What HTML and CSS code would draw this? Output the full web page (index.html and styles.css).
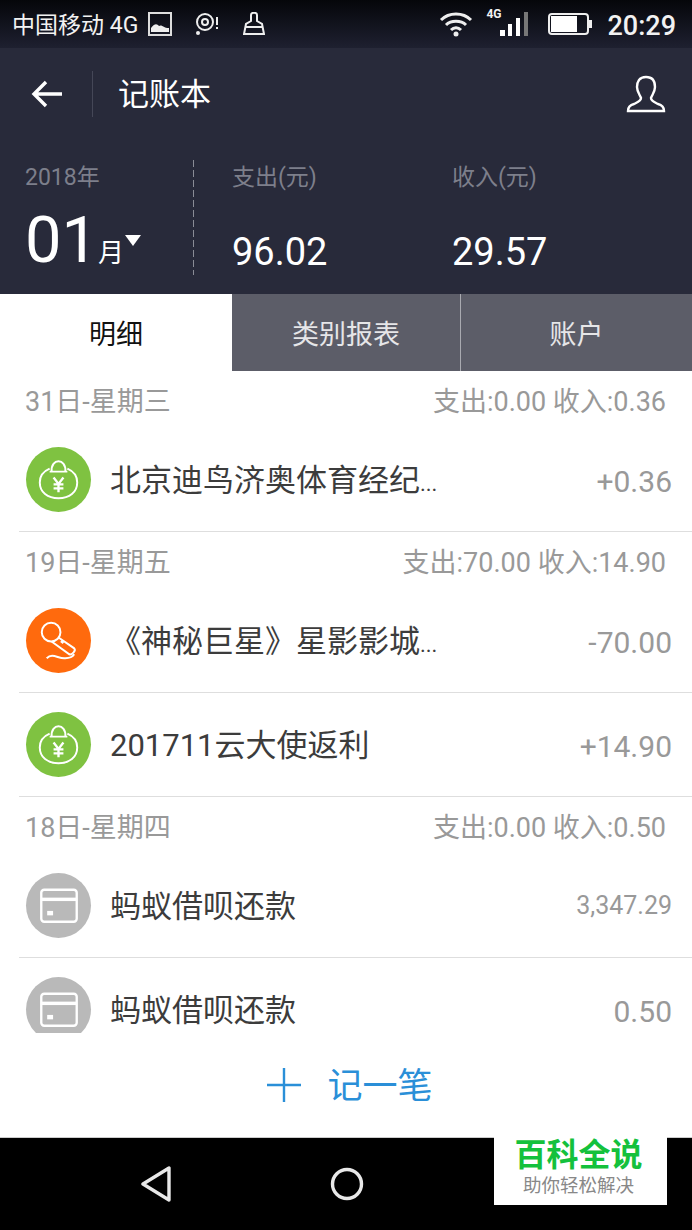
FILE: index.html
```html
<!DOCTYPE html>
<html lang="zh-CN">
<head>
    <meta charset="UTF-8">
    <title>记账本</title>
    <link rel="stylesheet" href="styles.css">
</head>
<body>
    <svg class="defs" width="0" height="0">
        <symbol id="bag" viewBox="0 0 66 66">
            <path d="M26 25 C25 11 41 11 40 25 M24 25 H42" fill="none" stroke="#fff" stroke-width="2"/>
            <path d="M24 22 C17 25 14 30 14 36 C14 46 22 52 33 52 C44 52 52 46 52 36 C52 30 49 25 42 22" fill="none" stroke="#fff" stroke-width="2"/>
            <path d="M28 31 L33 37.5 L38 31 M33 37.5 V46 M28 38 H38 M28 42 H38" fill="none" stroke="#fff" stroke-width="2.4"/>
        </symbol>
        <symbol id="mic" viewBox="0 0 66 66">
            <circle cx="25.5" cy="24.5" r="9.5" fill="none" stroke="#fff" stroke-width="2"/>
            <path d="M33 30 L49 41 C51 43 47 48 44 47 L26 34" fill="none" stroke="#fff" stroke-width="2"/>
            <path d="M35.5 33.5 L38 35.5" stroke="#fff" stroke-width="2.5"/>
            <path d="M21 51 C27 45 33 52 40 51 C44 51 47 50 49 47" fill="none" stroke="#fff" stroke-width="2"/>
        </symbol>
        <symbol id="card" viewBox="0 0 66 66">
            <rect x="15.5" y="17" width="36" height="32.5" rx="3" fill="none" stroke="#fff" stroke-width="2.4"/>
            <rect x="15.5" y="25" width="36" height="3.5" fill="#fff"/>
            <rect x="21.5" y="38.5" width="6" height="4.5" fill="#fff"/>
        </symbol>
    </svg>

    <div class="status-bar">
        <span class="carrier">中国移动 4G</span>
        <svg class="st-icon pic" viewBox="0 0 24 24">
            <rect x="1" y="1" width="22" height="22" fill="none" stroke="#ddd" stroke-width="2"/>
            <path d="M3 20 V16 C7 11 9 12 11 14 C14 12 15 16 21 16 V20 Z" fill="#eee"/>
        </svg>
        <svg class="st-icon ring" viewBox="0 0 26 24">
            <circle cx="10" cy="10" r="8" fill="none" stroke="#eee" stroke-width="2"/>
            <circle cx="10" cy="10" r="3" fill="none" stroke="#eee" stroke-width="2"/>
            <circle cx="3" cy="21" r="2" fill="#eee"/>
            <path d="M22 5 V13 M22 15 V17" stroke="#eee" stroke-width="2"/>
        </svg>
        <svg class="st-icon brush" viewBox="0 0 22 24">
            <path d="M8 9 V3 C8 0 14 0 14 3 V9 L19 12 L21 22 H1 L3 12 Z M3 15 H19" fill="none" stroke="#eee" stroke-width="2"/>
        </svg>
        <span class="spacer"></span>
        <svg class="st-icon wifi" viewBox="0 0 34 26">
            <path d="M2 9 C10 1 24 1 32 9 M7 14 C12 9 22 9 27 14 M12 19 C15 16 19 16 22 19" fill="none" stroke="#eee" stroke-width="3"/>
            <circle cx="17" cy="23" r="2.5" fill="#eee"/>
        </svg>
        <span class="net">4G</span>
        <svg class="st-icon signal" viewBox="0 0 28 24">
            <rect x="0" y="18" width="5" height="6" fill="#fff"/>
            <rect x="8" y="12" width="4" height="12" fill="#fff"/>
            <rect x="16" y="6" width="4" height="18" fill="#fff"/>
            <rect x="24" y="0" width="4" height="24" fill="#777"/>
        </svg>
        <svg class="st-icon battery" viewBox="0 0 44 22">
            <rect x="1" y="1" width="39" height="20" rx="3" fill="none" stroke="#eee" stroke-width="2"/>
            <rect x="3" y="3" width="26" height="16" fill="#fff"/>
            <rect x="41" y="7" width="3" height="8" fill="#eee"/>
        </svg>
        <span class="time">20:29</span>
    </div>

    <header class="header">
        <div class="nav">
            <svg class="back" viewBox="0 0 32 28">
                <path d="M15 2 L3 14 L15 26 M3 14 H31" fill="none" stroke="#fff" stroke-width="3.4"/>
            </svg>
            <span class="nav-line"></span>
            <span class="nav-title">记账本</span>
            <svg class="user" viewBox="0 0 40 38">
                <path d="M20 2 C13 2 11 7 11 12 C11 17 14 20 15 23 C15 26 12 27 8 29 C4 30 2 32 2 36 H38 C38 32 36 30 32 29 C28 27 25 26 25 23 C26 20 29 17 29 12 C29 7 27 2 20 2 Z" fill="none" stroke="#fff" stroke-width="2.4"/>
            </svg>
        </div>
        <div class="summary">
            <div class="date">
                <div class="label">2018年</div>
                <div class="month"><span class="month-num">01</span><span class="month-unit">月</span><span class="caret"></span></div>
            </div>
            <div class="split"></div>
            <div class="money money-out">
                <div class="label">支出(元)</div>
                <div class="amount">96.02</div>
            </div>
            <div class="money">
                <div class="label">收入(元)</div>
                <div class="amount">29.57</div>
            </div>
        </div>
    </header>

    <div class="tabs">
        <div class="tab tab-first active">明细</div>
        <div class="tab tab-second">类别报表</div>
        <div class="tab tab-third">账户</div>
    </div>

    <main class="list">
        <div class="day"><span>31日-星期三</span><span>支出:0.00 收入:0.36</span></div>
        <div class="row">
            <svg class="icon green"><use href="#bag"/></svg>
            <span class="name">北京迪鸟济奥体育经纪<span class="dots">...</span></span>
            <span class="value">+0.36</span>
        </div>
        <div class="day"><span>19日-星期五</span><span>支出:70.00 收入:14.90</span></div>
        <div class="row">
            <svg class="icon orange"><use href="#mic"/></svg>
            <span class="name">《神秘巨星》星影影城<span class="dots">...</span></span>
            <span class="value">-70.00</span>
        </div>
        <div class="row">
            <svg class="icon green"><use href="#bag"/></svg>
            <span class="name">201711云大使返利</span>
            <span class="value">+14.90</span>
        </div>
        <div class="day"><span>18日-星期四</span><span>支出:0.00 收入:0.50</span></div>
        <div class="row">
            <svg class="icon gray"><use href="#card"/></svg>
            <span class="name">蚂蚁借呗还款</span>
            <span class="value small">3,347.29</span>
        </div>
        <div class="row">
            <svg class="icon gray"><use href="#card"/></svg>
            <span class="name">蚂蚁借呗还款</span>
            <span class="value">0.50</span>
        </div>
    </main>

    <div class="add">
        <svg class="plus" viewBox="0 0 34 34"><path d="M17 0 V34 M0 17 H34" stroke="#2a8fd8" stroke-width="2.4"/></svg>
        <span class="add-text">记一笔</span>
    </div>

    <div class="softkeys">
        <svg class="key key-back" viewBox="0 0 32 36"><path d="M29 2 V34 L3 18 Z" fill="none" stroke="#e8e8e8" stroke-width="3.4" stroke-linejoin="round"/></svg>
        <svg class="key key-home" viewBox="0 0 34 34"><circle cx="17" cy="17" r="14.5" fill="none" stroke="#e8e8e8" stroke-width="3.4"/></svg>
        <div class="mark">
            <div class="mark-title">百科全说</div>
            <div class="mark-sub">助你轻松解决</div>
        </div>
    </div>
</body>
</html>
```

FILE: styles.css
```css
* {
    box-sizing: border-box;
}
html, body {
    margin: 0;
    padding: 0;
}
body {
    width: 692px;
    height: 1230px;
    overflow: hidden;
    background-color: #fff;
    font-family: Roboto, "Noto Sans CJK SC", sans-serif;
}
.defs {
    display: block;
    height: 0;
}

/* status bar */
.status-bar {
    height: 48px;
    display: flex;
    align-items: center;
    padding: 0 16px 0 12px;
    background: linear-gradient(#05060a, #1e2030);
    color: #f2f2f2;
}
.carrier {
    font-size: 23px;
    white-space: nowrap;
    padding-bottom: 2px;
}
.spacer {
    flex: 1;
}
.st-icon {
    display: block;
    flex: none;
}
.pic {
    width: 24px;
    height: 24px;
    margin-left: 10px;
}
.ring {
    width: 26px;
    height: 24px;
    margin-left: 23px;
}
.brush {
    width: 22px;
    height: 24px;
    margin-left: 22px;
}
.wifi {
    width: 34px;
    height: 26px;
}
.net {
    font-size: 12px;
    font-weight: 700;
    margin: -20px 0 0 13px;
}
.signal {
    width: 28px;
    height: 24px;
    margin: 0 0 0 -1px;
}
.battery {
    width: 44px;
    height: 22px;
    margin-left: 20px;
}
.time {
    font-size: 27px;
    font-weight: 500;
    padding-top: 3px;
    margin-left: 15px;
}

/* header */
.header {
    height: 246px;
    background-color: #282a3a;
    color: #fff;
}
.nav {
    height: 92px;
    display: flex;
    align-items: center;
    padding: 0 26px 0 31px;
}
.back {
    width: 32px;
    height: 28px;
}
.nav-line {
    width: 1px;
    height: 46px;
    margin-left: 29px;
    background-color: #454757;
}
.nav-title {
    flex: 1;
    font-size: 31px;
    margin-left: 25px;
    padding-bottom: 6px;
}
.user {
    width: 40px;
    height: 38px;
}
.summary {
    display: flex;
    padding: 20px 0 0 25px;
}
.date {
    width: 168px;
}
.split {
    width: 1px;
    height: 115px;
    background: repeating-linear-gradient(#8a8c96 0 7px, transparent 7px 10px);
}
.label {
    font-size: 23px;
    line-height: 34px;
    padding-top: 1px;
    height: 35px;
    color: #7d7f8b;
}
.month {
    display: flex;
    align-items: baseline;
    margin-top: 10px;
}
.month-num {
    font-size: 65px;
    line-height: 70px;
}
.month-unit {
    font-size: 26px;
}
.caret {
    width: 0;
    height: 0;
    margin: 0 0 0 1px;
    border-left: 8px solid transparent;
    border-right: 8px solid transparent;
    border-top: 11px solid #fff;
    align-self: center;
}
.money {
    width: 220px;
}
.money-out {
    margin-left: 38px;
}
.amount {
    font-size: 38px;
    line-height: 44px;
    margin-top: 35px;
}

/* tabs */
.tabs {
    height: 77px;
    display: flex;
    font-size: 27px;
    text-align: center;
    line-height: 77px;
}
.tab {
    background-color: #5c5d68;
    color: #e6e6e8;
    padding-top: 3px;
}
.tab-first {
    width: 232px;
}
.tab-second {
    width: 229px;
    border-right: 1px solid #a9aab0;
}
.tab-third {
    flex: 1;
}
.tab.active {
    background-color: #fff;
    color: #111;
}

/* list */
.list {
    height: 662px;
    overflow: hidden;
}
.day {
    height: 57px;
    display: flex;
    justify-content: space-between;
    align-items: center;
    padding: 0 26px 0 25px;
    font-size: 27px;
    color: #999;
}
.row {
    height: 104px;
    margin-left: 19px;
    padding: 0 20px 0 7px;
    display: flex;
    align-items: center;
    border-bottom: 1px solid #dedede;
}
.icon {
    width: 65px;
    height: 65px;
    flex: none;
    border-radius: 50%;
}
.green {
    background-color: #7fc241;
}
.orange {
    background-color: #ff6a0d;
}
.gray {
    background-color: #b9b9b9;
}
.name {
    flex: 1;
    margin-left: 19px;
    font-size: 31px;
    color: #3c3c3c;
    white-space: nowrap;
    padding-bottom: 5px;
}
.dots {
    font-size: 22px;
}
.value {
    font-size: 30px;
    color: #999;
    padding-top: 4px;
}
.value.small {
    font-size: 25px;
    padding-top: 0;
}

/* add button */
.add {
    height: 104px;
    display: flex;
    align-items: center;
    justify-content: center;
    gap: 26px;
    padding: 0 0 0 8px;
    font-size: 35px;
    color: #2a8fd8;
}
.add-text {
    padding-bottom: 6px;
}
.plus {
    width: 34px;
    height: 34px;
}

/* bottom keys */
.softkeys {
    position: relative;
    height: 93px;
    background-color: #000;
    border-top: 1px solid #ccc;
    display: flex;
    align-items: center;
    padding: 0 0 0 140px;
}
.key {
    display: block;
    flex: none;
}
.key-back {
    width: 32px;
    height: 36px;
}
.key-home {
    width: 34px;
    height: 34px;
    margin-left: 158px;
}
.mark {
    position: absolute;
    left: 494px;
    top: -1px;
    width: 173px;
    height: 68px;
    padding-right: 4px;
    background-color: #fff;
    text-align: center;
}
.mark-title {
    font-size: 32px;
    font-weight: 700;
    line-height: 36px;
    margin-bottom: 2px;
    color: #14c13c;
}
.mark-sub {
    font-size: 18.5px;
    line-height: 22px;
    color: #888;
}
```
